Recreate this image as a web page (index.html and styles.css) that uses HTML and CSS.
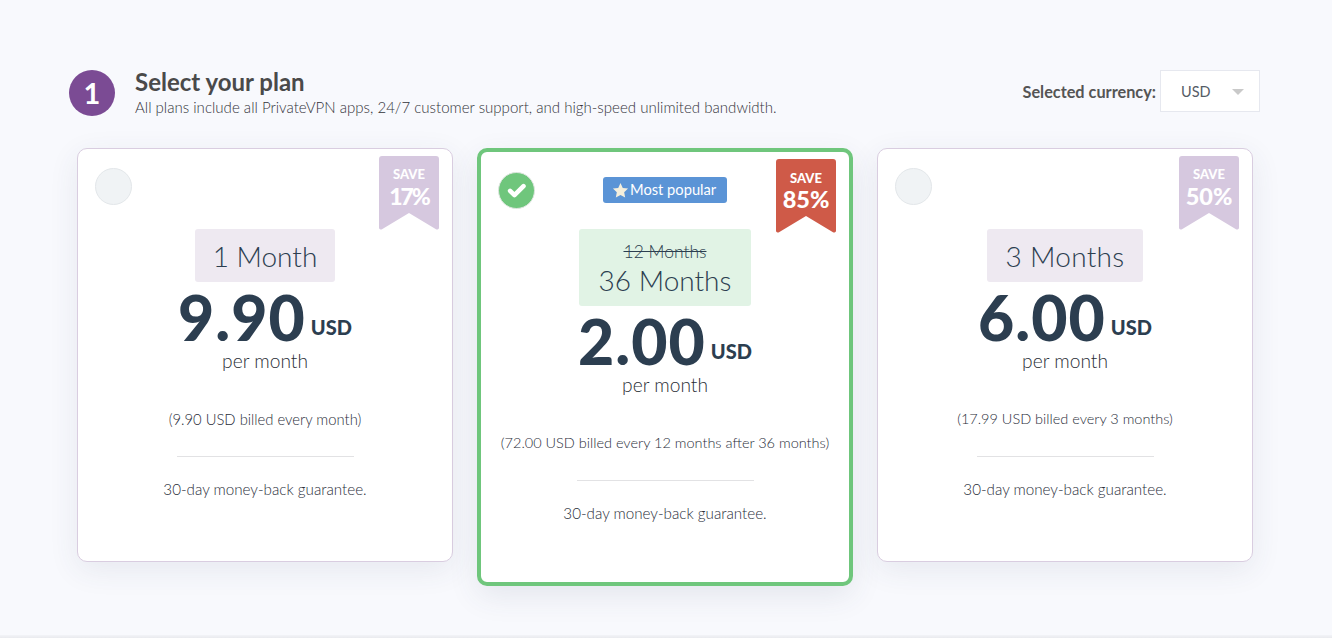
FILE: index.html
```html
<!DOCTYPE html>
<html lang="en">
<head>
<meta charset="utf-8">
<title>Select your plan</title>
<link rel="stylesheet" href="styles.css">
</head>
<body>
<main class="page">
  <header class="head">
    <div class="step">1</div>
    <div class="head-text">
      <h1>Select your plan</h1>
      <p>All plans include all PrivateVPN apps, 24/7 customer support, and high-speed unlimited bandwidth.</p>
    </div>
    <div class="currency">
      <span class="currency-label">Selected currency:</span>
      <div class="select"><span>USD</span><i class="caret"></i></div>
    </div>
  </header>
  <section class="plans">
    <article class="card">
      <div class="radio"></div>
      <div class="ribbon"><svg viewBox="0 0 60 74"><path d="M3 0H57a3 3 0 0 1 3 3V71.500a2 2 0 0 1-3 1.800L30 57 3 73.300A2 2 0 0 1 0 71.500V3a3 3 0 0 1 3-3Z"/></svg><b>SAVE</b><strong class="narrow">17%</strong></div>
      <div class="term"><span class="term-now">1 Month</span></div>
      <div class="price"><span class="amount">9.90</span><span class="cur">USD</span></div>
      <div class="per">per month</div>
      <div class="billed">(9.90 USD billed every month)</div>
      <hr class="rule">
      <div class="guarantee">30-day money-back guarantee.</div>
    </article>
    <article class="card card-top">
      <div class="radio radio-on"><svg viewBox="0 0 24 24"><path d="M7.600 12.200l3 3 6.200-6.200" /></svg></div>
      <div class="badge"><svg viewBox="0 0 24 24"><path d="M12 1.500l3.200 6.900 7.500.9-5.500 5.200 1.400 7.500L12 18.300l-6.600 3.700 1.400-7.500L1.300 9.300l7.500-.9Z"/></svg>Most popular</div>
      <div class="ribbon ribbon-hot"><svg viewBox="0 0 60 74"><path d="M3 0H57a3 3 0 0 1 3 3V71.500a2 2 0 0 1-3 1.800L30 57 3 73.300A2 2 0 0 1 0 71.500V3a3 3 0 0 1 3-3Z"/></svg><b>SAVE</b><strong>85%</strong></div>
      <div class="term term-green"><s>12 Months</s><span class="term-now">36 Months</span></div>
      <div class="price"><span class="amount">2.00</span><span class="cur">USD</span></div>
      <div class="per">per month</div>
      <div class="billed billed-long">(72.00 USD billed every 12 months after 36 months)</div>
      <hr class="rule">
      <div class="guarantee">30-day money-back guarantee.</div>
    </article>
    <article class="card">
      <div class="radio"></div>
      <div class="ribbon"><svg viewBox="0 0 60 74"><path d="M3 0H57a3 3 0 0 1 3 3V71.500a2 2 0 0 1-3 1.800L30 57 3 73.300A2 2 0 0 1 0 71.500V3a3 3 0 0 1 3-3Z"/></svg><b>SAVE</b><strong>50%</strong></div>
      <div class="term term-wide"><span class="term-now">3 Months</span></div>
      <div class="price"><span class="amount">6.00</span><span class="cur">USD</span></div>
      <div class="per">per month</div>
      <div class="billed billed-long">(17.99 USD billed every 3 months)</div>
      <hr class="rule">
      <div class="guarantee">30-day money-back guarantee.</div>
    </article>
  </section>
</main>
<div class="footer-edge"></div>
</body>
</html>
```
FILE: styles.css
```css
* { box-sizing: border-box; }
html, body { margin: 0; height: 100%; }
body {
  background: #f8f9fd;
  font-family: "Lato", "Open Sans", sans-serif;
  color: #2c3e50;
  overflow: hidden;
  position: relative;
}
.page { padding: 70px 72px 0 69px; }

.head { display: flex; align-items: flex-start; height: 78px; }
.step {
  width: 46px; height: 46px; border-radius: 50%;
  background: #7b4b94; color: #fff;
  font-weight: 700; font-size: 29px; line-height: 45px; text-align: center;
  flex: none;
}
.head-text { margin-left: 20px; flex: 1; }
.head-text h1 { margin: 0; font-size: 24px; line-height: 24px; font-weight: 700; color: #4a4a4a; }
.head-text p { margin: 4px 0 0; font-size: 15.07px; line-height: 18px; color: #33333a; font-weight: 300; }
.currency { display: flex; align-items: center; height: 42px; }
.currency-label { font-size: 16.3px; font-weight: 700; color: #555; margin-right: 4px; }
.select {
  width: 100px; height: 42px; background: #fff; border: 1px solid #e6e8ef;
  display: flex; align-items: center; padding-left: 20px;
  font-size: 14.5px; color: #555c66; position: relative;
}
.caret {
  position: absolute; right: 15px; top: 18px;
  border-left: 6px solid transparent; border-right: 6px solid transparent;
  border-top: 6px solid #c9c9c9;
}

.plans { display: flex; align-items: flex-start; gap: 24px; margin-left: 8px; }
.card {
  position: relative; width: 376px; height: 414px; flex: none;
  background: #fff; border: 1px solid #d9cde0; border-radius: 10px;
  box-shadow: 0 8px 30px rgba(60, 70, 100, .09);
  display: flex; flex-direction: column; align-items: center;
  padding-top: 80px;
}
.card-top {
  height: 438px; border: 4px solid #6fc67c; border-radius: 10px;
  padding-top: 77px;
  box-shadow: 0 10px 30px rgba(60, 70, 100, .10);
}
.radio {
  position: absolute; left: 17px; top: 19px;
  width: 37px; height: 37px; border-radius: 50%;
  background: #f0f3f5; border: 1px solid #e3e7ea;
}
.radio-on {
  left: 17px; top: 20px; background: #6fc67c; border-color: #dfe6e0;
}
.radio-on svg { display: block; width: 100%; height: 100%; fill: none; stroke: #fff; stroke-width: 3.1; stroke-linecap: round; stroke-linejoin: round; }

.ribbon {
  position: absolute; top: 7px; right: 13px; width: 60px; height: 74px;
  color: #fff; text-align: center;
}
.ribbon svg { position: absolute; inset: 0; width: 100%; height: 100%; fill: #d6c8df; }
.ribbon b, .ribbon strong { position: relative; display: block; }
.ribbon b { font-size: 13px; line-height: 14px; padding-top: 11px; font-weight: 900; }
.ribbon strong { font-size: 23.5px; line-height: 26px; font-weight: 900; margin-top: 2px; }
.ribbon strong.narrow { letter-spacing: -2px; font-size: 23px; }
.ribbon-hot svg { fill: #cf5a48; }
.ribbon-hot b { padding-top: 12px; }
.ribbon-hot strong { margin-top: 1px; }

.badge {
  position: absolute; left: 122px; top: 25px;
  width: 124px; height: 26px; background: #5b94d6; border-radius: 3px;
  color: #fff; font-size: 14.7px; line-height: 24px; padding: 0 0 2px 9px;
  display: flex; align-items: center; gap: 1px; white-space: nowrap;
}
.badge svg { width: 17px; height: 17px; fill: #f5efdc; flex: none; margin-top: 2px; }

.term {
  background: #eee9f1; border-radius: 3px; text-align: center;
  padding: 0 18px; height: 53px; display: flex; flex-direction: column; justify-content: center;
}
.term-now { font-size: 28px; line-height: 36px; color: #2c3e50; font-weight: 300; white-space: nowrap; }
.term-wide { padding: 0 19px; }
.term-wide .term-now { letter-spacing: .3px; }
.term-green { background: #e1f3e5; height: 77px; padding: 0 20px; }
.term-green s { font-size: 17.5px; line-height: 21px; color: #2c3e50; margin-top: 4px; font-weight: 300; }
.price { display: flex; align-items: baseline; justify-content: center; height: 54px; margin-top: 8px; }
.amount { font-size: 62.5px; line-height: 54px; font-weight: 900; color: #2c3e50; letter-spacing: 1px; }
.cur { font-size: 20px; line-height: 20px; font-weight: 900; color: #2c3e50; margin-left: 5px; position: relative; top: -6px; }
.per { font-size: 19.2px; line-height: 22px; color: #2a2e36; margin-top: 6px; font-weight: 300; }
.billed { font-size: 14.8px; line-height: 18px; color: #2a2e3a; margin-top: 38px; white-space: nowrap; font-weight: 300; }
.billed-long { font-size: 14.5px; }
.rule { width: 177px; border: 0; border-top: 1px solid #e2e2e4; margin: 28px 0 0; }
.guarantee { font-size: 15.2px; line-height: 18px; color: #2a2e3a; margin-top: 23px; font-weight: 300; }
.footer-edge { position: absolute; left: 0; right: 0; bottom: 0; height: 3px; background: linear-gradient(#f3f4f8, #e9eaee); }
```
